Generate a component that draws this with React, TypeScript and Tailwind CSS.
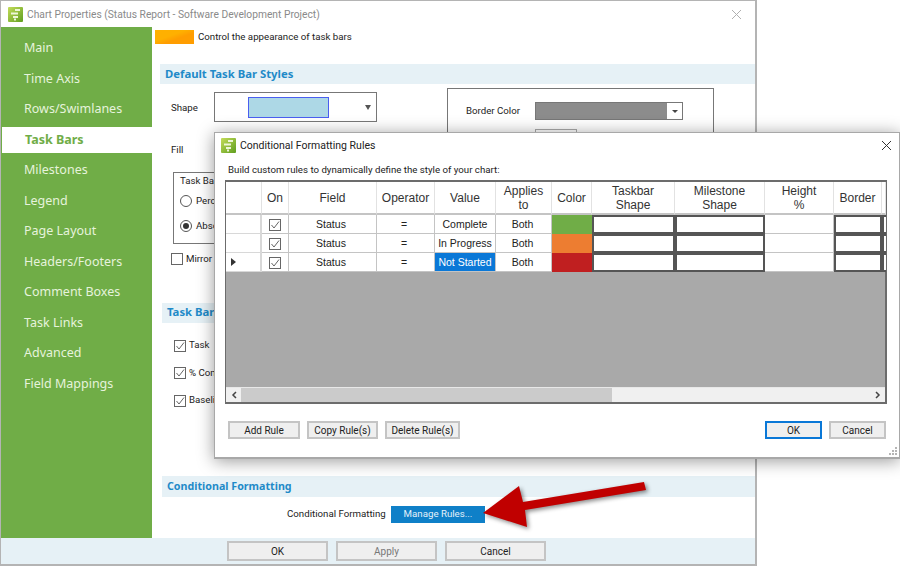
import React from "react";

const NAV = ["Main","Time Axis","Rows/Swimlanes","Task Bars","Milestones","Legend","Page Layout","Headers/Footers","Comment Boxes","Task Links","Advanced","Field Mappings"];

function Logo() {
  return (
    <svg width="15" height="15" viewBox="0 0 15 15" className="shrink-0">
      <defs>
        <linearGradient id="lg" x1="0" y1="0" x2="1" y2="1">
          <stop offset="0" stopColor="#c4dc5a" />
          <stop offset="1" stopColor="#5f9e1f" />
        </linearGradient>
      </defs>
      <rect width="15" height="15" rx="1" fill="url(#lg)" />
      <path d="M7 2h5v2H7zM3 5.500h7v2H3zM5 9h5v2H5zM6 11.500h2v2H6z" fill="#eef6d8" />
    </svg>
  );
}

function Section({ title, className }: { title: string; className: string }) {
  return (
    <div className={"flex h-[20px] shrink-0 items-center bg-[#e6f1f6] pl-[5px] font-['Noto_Sans',sans-serif] font-bold text-[#1f8ac8] " + className}>
      {title}
    </div>
  );
}

function Check({ checked }: { checked: boolean }) {
  return (
    <span className="flex h-[12px] w-[12px] shrink-0 items-center justify-center border border-[#666] bg-white">
      {checked && (
        <svg width="10" height="10" viewBox="0 0 10 10">
          <path d="M1.500 5l2.500 3 5-6.500" fill="none" stroke="#666" strokeWidth="1" />
        </svg>
      )}
    </span>
  );
}

function Radio({ checked }: { checked: boolean }) {
  return (
    <span className="flex h-[12px] w-[12px] items-center justify-center rounded-full border border-[#555] bg-white">
      {checked && <span className="h-[6px] w-[6px] rounded-full bg-[#333]" />}
    </span>
  );
}

function WinButton({ label, className }: { label: string; className: string }) {
  return (
    <div className={"flex items-center justify-center bg-[#efefef] text-[10px] " + className}>{label}</div>
  );
}

const HEAD = ["", "On", "Field", "Operator", "Value", "Applies\nto", "Color", "Taskbar\nShape", "Milestone\nShape", "Height\n%", "Border", ""];
const ROWS = [
  { value: "Complete", color: "bg-[#70ad47]", cur: false, sel: false },
  { value: "In Progress", color: "bg-[#ed7d31]", cur: false, sel: false },
  { value: "Not Started", color: "bg-[#c01f20]", cur: true, sel: true },
];
const cols = "grid grid-cols-[36px_27px_88px_58px_61px_56px_40px_83px_90px_69px_48px_4px]";
const cell = "flex items-center justify-center border-r border-b border-[#c4c4c4] pt-[1px] text-[10.5px]";
const shift = " pr-[3px]";
const shapeCell = "border-2 border-[#555] bg-white";

function Dialog() {
  return (
    <div className="absolute left-[214px] top-[132px] flex h-[327px] w-[686px] flex-col border border-b-2 border-[#a8a8a8] bg-white text-[#222] shadow-[0_2px_16px_rgba(0,0,0,0.4)]">
      <div className="flex h-[25px] shrink-0 items-center gap-[4px] pl-[6px] pr-[7px]">
        <Logo />
        <span className="flex-1 text-[10.5px]">Conditional Formatting Rules</span>
        <svg width="11" height="11" viewBox="0 0 11 11">
          <path d="M1 1l9 9M10 1l-9 9" stroke="#333" strokeWidth="1" />
        </svg>
      </div>
      <div className="ml-[13px] mt-[4px] h-[15px] shrink-0 text-[9.7px] leading-[15px]">
        Build custom rules to dynamically define the style of your chart:
      </div>
      <div className="ml-[10px] mt-[3px] flex h-[224px] w-[662px] shrink-0 flex-col border-y-2 border-l border-r-2 border-[#6c6c6c] bg-[#a9a9a9] font-['Liberation_Sans',sans-serif]">
        <div className={cols + " h-[33px] shrink-0 bg-white"}>
          {HEAD.map((h, i) => (
            <div key={i} className="flex items-center justify-center whitespace-pre-line border-r border-b-2 border-[#e2e2e2] border-b-[#c4c4c4] text-center text-[12px] leading-[14px] text-[#333]">
              {h}
            </div>
          ))}
        </div>
        {ROWS.map((r) => (
          <div key={r.value} className={cols + " h-[19px] shrink-0 bg-white"}>
            <div className="flex items-center border-r-2 border-b border-[#d8d8d8] pl-[5px]">
              {r.cur && <span className="h-0 w-0 border-y-[4px] border-l-[5px] border-y-transparent border-l-[#333]" />}
            </div>
            <div className={cell + " pt-0"}><Check checked /></div>
            <div className={cell + shift}>Status</div>
            <div className={cell + shift}>=</div>
            <div className={cell + (r.sel ? " bg-[#0a78d7] text-white" : "")}>{r.value}</div>
            <div className={cell + " pr-[2px]"}>Both</div>
            <div className={r.color} />
            <div className={shapeCell} />
            <div className={shapeCell} />
            <div className={cell} />
            <div className={shapeCell} />
            <div className={shapeCell + " border-r-0"} />
          </div>
        ))}
        <div className="flex-1" />
        <div className="flex h-[15px] shrink-0 border-t border-[#e8e8e8] bg-[#f0f0f0]">
          <div className="flex w-[15px] items-center justify-center">
            <svg width="6" height="8" viewBox="0 0 6 8"><path d="M5 1L2 4l3 3" fill="none" stroke="#444" strokeWidth="1.500" /></svg>
          </div>
          <div className="w-[371px] bg-[#cbcbcb]" />
          <div className="flex-1" />
          <div className="flex w-[15px] items-center justify-center">
            <svg width="6" height="8" viewBox="0 0 6 8"><path d="M1 1l3 3-3 3" fill="none" stroke="#444" strokeWidth="1.500" /></svg>
          </div>
        </div>
      </div>
      <div className="mt-[17px] ml-[13px] flex h-[18px] shrink-0 gap-[7px]">
        <WinButton label="Add Rule" className="w-[72px] border-2 border-[#c4c4c4]" />
        <WinButton label="Copy Rule(s)" className="w-[71px] border-2 border-[#c4c4c4]" />
        <WinButton label="Delete Rule(s)" className="w-[75px] border-2 border-[#c4c4c4]" />
        <div className="flex-1" />
        <WinButton label="OK" className="w-[57px] border-2 border-[#0a78d7]" />
        <WinButton label="Cancel" className="mr-[13px] w-[57px] border-2 border-[#c4c4c4]" />
      </div>
      <svg className="absolute bottom-[1px] right-[1px]" width="9" height="9" viewBox="0 0 9 9">
        <path d="M6 0h2v2H6zM3 3h2v2H3zM6 3h2v2H6zM0 6h2v2H0zM3 6h2v2H3zM6 6h2v2H6z" fill="#b5b5b5" />
      </svg>
    </div>
  );
}

export default function App() {
  return (
    <div className="relative h-[566px] w-[900px] overflow-hidden bg-white font-['Roboto','Noto_Sans',sans-serif] text-[#222]">
      <div className="flex h-[566px] w-[757px] flex-col border border-b-2 border-r-2 border-[#b4b4b4]">
        <div className="flex h-[26px] shrink-0 items-center gap-[4px] pl-[7px] pr-[13px] pt-[1px]">
          <Logo />
          <span className="flex-1 text-[10.25px] text-[#8a8a8a]">Chart Properties (Status Report - Software Development Project)</span>
          <svg width="11" height="11" viewBox="0 0 11 11">
            <path d="M1 1l9 9M10 1l-9 9" stroke="#b0b0b0" strokeWidth="1" />
          </svg>
        </div>
        <div className="flex min-h-0 flex-1">
          <div className="w-[151px] shrink-0 bg-[#70ad47] pt-[6.4px] font-['Noto_Sans',sans-serif]">
            {NAV.map((n) => (
              <div
                key={n}
                className={
                  "flex h-[30.5px] items-center pl-[23px] text-[12.5px] " +
                  (n === "Task Bars" ? "ml-[1px] border-y-[2px] border-[#70ad47] bg-white pl-[22px] font-bold text-[#70ad47]" : "text-[#e6f3dc]")
                }
              >
                {n}
              </div>
            ))}
          </div>
          <div className="flex min-w-0 flex-1 flex-col overflow-hidden">
            <div className="ml-[3px] mt-[3px] flex h-[14px] shrink-0 items-center gap-[4px] text-[9.7px]">
              <span className="h-[14px] w-[39px] bg-[linear-gradient(160deg,#ffb000_40%,#ff9d00_60%)]" />
              Control the appearance of task bars
            </div>
            <Section title="Default Task Bar Styles" className="ml-[8px] mt-[20px] pt-[1px] text-[11.3px]" />
            <div className="mt-[4px] flex shrink-0 items-start">
              <div className="ml-[19px] w-[276px] text-[9.7px]">
                <div className="mt-[4px] flex h-[30px] items-center">
                  <span className="w-[43px] pt-[2px]">Shape</span>
                  <div className="flex h-[30px] w-[163px] items-center border border-[#777] pl-[33px] pr-[5px]">
                    <div className="h-[21px] w-[81px] border border-[#4a5ef0] bg-[#add8e6]" />
                    <div className="flex-1" />
                    <span className="h-0 w-0 border-x-[3px] border-t-[5px] border-x-transparent border-t-[#555]" />
                  </div>
                </div>
                <div className="mt-[20px] h-[16px] leading-[16px]">Fill</div>
                <div className="ml-[2px] mt-[14px] h-[72px] w-[120px] border border-[#777] pl-[6px] pt-[1px]">
                  <div>Task Bar Size</div>
                  <div className="mt-[5px] flex items-center gap-[4px]"><Radio checked={false} />Percent</div>
                  <div className="mt-[11px] flex items-center gap-[4px]"><Radio checked />Absolute</div>
                </div>
                <div className="mt-[8px] flex items-center gap-[3px]"><Check checked={false} />Mirror</div>
              </div>
              <div className="h-[120px] w-[267px] border border-[#777] pl-[18px] pt-[13px] text-[9.7px]">
                <div className="flex h-[18px] items-center">
                  <span className="w-[69px]">Border Color</span>
                  <div className="flex h-[18px] w-[148px] border border-[#777] bg-[#8c8c8c]">
                    <div className="flex-1" />
                    <div className="flex w-[15px] items-center justify-center bg-white">
                      <span className="h-0 w-0 border-x-[3px] border-t-[3px] border-x-transparent border-t-[#444]" />
                    </div>
                  </div>
                </div>
                <div className="ml-[69px] mt-[9px] h-[18px] w-[42px] border border-[#aaa]" />
              </div>
            </div>
            <Section title="Task Bar Labels" className="ml-[10px] mt-[36px] text-[11.3px]" />
            <div className="ml-[22px] mt-[17px] flex shrink-0 flex-col gap-[15.5px] text-[9.7px]">
              <div className="flex h-[12px] items-center gap-[3px]"><Check checked />Task</div>
              <div className="flex h-[12px] items-center gap-[3px]"><Check checked />% Complete</div>
              <div className="flex h-[12px] items-center gap-[3px]"><Check checked />Baseline</div>
            </div>
            <Section title="Conditional Formatting" className="ml-[10px] mt-[69px] !h-[21px] text-[10.7px]" />
            <div className="ml-[135px] mt-[9px] flex h-[17px] shrink-0 items-center text-[9.7px]">
              <span className="w-[104px]">Conditional Formatting</span>
              <div className="flex h-[17px] w-[94px] items-center justify-center bg-[#0f80c8] text-[#e4f1fa]">Manage Rules...</div>
            </div>
          </div>
        </div>
        <div className="flex h-[26px] shrink-0 items-center gap-[8px] bg-[#e6f1f6] pl-[226px]">
          <WinButton label="OK" className="h-[20px] w-[101px] border-2 border-[#c4c4c4]" />
          <WinButton label="Apply" className="h-[20px] w-[101px] border-2 border-[#c4c4c4] text-[#777]" />
          <WinButton label="Cancel" className="h-[20px] w-[101px] border-2 border-[#c4c4c4]" />
        </div>
      </div>
      <Dialog />
      <svg className="absolute left-[470px] top-[470px] drop-shadow-[2px_2px_2px_rgba(0,0,0,0.45)]" width="190" height="70" viewBox="470 470 190 70">
        <path d="M483 513L519 486L523 502L644 482L646 490L525 510L527 527Z" fill="#c00000" />
      </svg>
    </div>
  );
}
